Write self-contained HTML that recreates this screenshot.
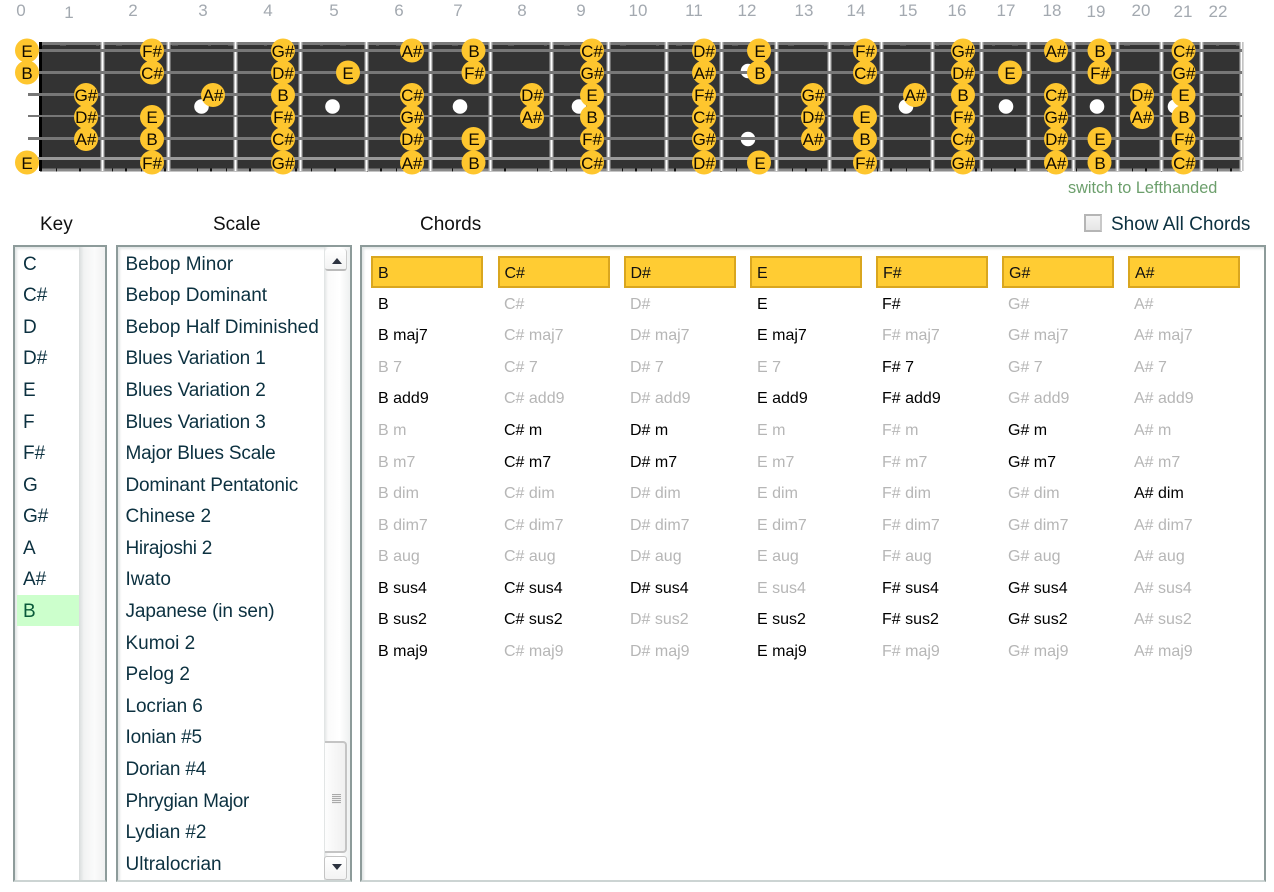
<!DOCTYPE html>
<html><head><meta charset="utf-8"><style>
html,body{margin:0;padding:0;background:#fff}
body{width:1274px;height:892px;position:relative;overflow:hidden;font-family:"Liberation Sans",sans-serif}
.a{position:absolute}
svg{position:absolute;left:0;top:0}
.h{position:absolute;top:214px;font-size:19px;line-height:22px;color:#111}
.box{position:absolute;top:245px;height:637px;box-sizing:border-box;border:2px solid #8d9b9a;border-bottom-color:#ccd4d3;background:#fff;box-shadow:inset 2px 2px 2px #e2e6e6}
.list{position:absolute;top:248.7px;font-size:19px;color:#0c3140}
.list div{height:31.58px;line-height:31.58px;white-space:nowrap}
.ch{position:absolute;top:288.7px;font-size:16px;color:#b6b6b6}
.ch div{height:31.58px;line-height:31.58px;white-space:nowrap}
.ch b{font-weight:normal;color:#000}
.hd{position:absolute;top:256px;width:112px;height:32px;box-sizing:border-box;background:#fc3;border:2px solid #d9a61f;font-size:16px;line-height:31px;padding-left:5px;color:#111}
svg.f text{font-size:17px;text-anchor:middle;fill:#100a00}
svg.n text{font-size:17px;text-anchor:middle;fill:#a3a9b0}
</style></head><body>
<svg class="n" width="1274" height="30">
<text x="21" y="16">0</text><text x="69" y="18">1</text><text x="133" y="16">2</text><text x="203" y="16">3</text><text x="268" y="16">4</text><text x="334" y="16">5</text><text x="399" y="16">6</text><text x="458" y="16">7</text><text x="522" y="16">8</text><text x="581" y="16">9</text><text x="638" y="16">10</text><text x="694" y="16">11</text><text x="747" y="16">12</text><text x="804" y="16">13</text><text x="856" y="16">14</text><text x="908" y="16">15</text><text x="957" y="16">16</text><text x="1006" y="16">17</text><text x="1052" y="16">18</text><text x="1096" y="17">19</text><text x="1141" y="16">20</text><text x="1183" y="17">21</text><text x="1218" y="17">22</text>
</svg>
<svg class="f" width="1274" height="180" style="top:0">
<rect x="40" y="42" width="1202" height="129" fill="#333"/>
<rect x="40" y="42" width="1202" height="3" fill="#7a7a7a"/>
<rect x="40" y="168.500" width="1202" height="3" fill="#8a8a8a"/>
<line x1="40" y1="170" x2="1242" y2="170" stroke="#111" stroke-width="3" stroke-dasharray="2 14 1 22 2 31 1 12"/>
<line x1="40" y1="45" x2="1242" y2="45" stroke="#777" stroke-width="1" stroke-dasharray="3 17 6 30"/>
<rect x="39" y="42" width="3" height="129" fill="#000"/>
<path d="M102.500 42V171M168.500 42V171M235.500 42V171M300.500 42V171M366.500 42V171M430.500 42V171M490.500 42V171M551.500 42V171M608.500 42V171M666.500 42V171M721.500 42V171M776.500 42V171M829.500 42V171M881.500 42V171M932.500 42V171M981.500 42V171M1028.500 42V171M1073.500 42V171M1117.500 42V171M1161.500 42V171M1201.500 42V171M1241.500 42V171" stroke="#b0b0b0" stroke-width="4" fill="none"/>
<path d="M102.500 42V171M168.500 42V171M235.500 42V171M300.500 42V171M366.500 42V171M430.500 42V171M490.500 42V171M551.500 42V171M608.500 42V171M666.500 42V171M721.500 42V171M776.500 42V171M829.500 42V171M881.500 42V171M932.500 42V171M981.500 42V171M1028.500 42V171M1073.500 42V171M1117.500 42V171M1161.500 42V171M1201.500 42V171M1241.500 42V171" stroke="#fff" stroke-width="1.500" fill="none"/>
<g fill="#fff">
<circle cx="201.500" cy="106.500" r="7.300"/><circle cx="332.500" cy="106.500" r="7.300"/><circle cx="460" cy="106.500" r="7.300"/><circle cx="579" cy="106.500" r="7.300"/><circle cx="748" cy="71" r="7.300"/><circle cx="748" cy="139" r="7.300"/><circle cx="906" cy="106.500" r="7.300"/><circle cx="1006" cy="106.500" r="7.300"/><circle cx="1097" cy="106.500" r="7.300"/><circle cx="1175" cy="106.500" r="7.300"/>
</g>
<g fill="#777">
<rect x="30" y="49" width="1212" height="3"/><rect x="30" y="71" width="1212" height="3"/><rect x="28" y="93" width="1214" height="3"/><rect x="28" y="115" width="1214" height="2"/><rect x="28" y="137" width="1214" height="3"/><rect x="30" y="157" width="1212" height="3" fill="#999"/>
</g>
<g fill="#fec62e">
<circle cx="27" cy="50.500" r="12"/><circle cx="152" cy="50.500" r="12"/><circle cx="283" cy="50.500" r="12"/><circle cx="412" cy="50.500" r="12"/><circle cx="473.500" cy="50.500" r="12"/><circle cx="592" cy="50.500" r="12"/><circle cx="704" cy="50.500" r="12"/><circle cx="759" cy="50.500" r="12"/><circle cx="865" cy="50.500" r="12"/><circle cx="963" cy="50.500" r="12"/><circle cx="1056" cy="50.500" r="12"/><circle cx="1099.500" cy="50.500" r="12"/><circle cx="1183.500" cy="50.500" r="12"/>
<circle cx="27" cy="72.500" r="12"/><circle cx="152" cy="72.500" r="12"/><circle cx="283" cy="72.500" r="12"/><circle cx="348" cy="72.500" r="12"/><circle cx="473.500" cy="72.500" r="12"/><circle cx="592" cy="72.500" r="12"/><circle cx="704" cy="72.500" r="12"/><circle cx="759" cy="72.500" r="12"/><circle cx="865" cy="72.500" r="12"/><circle cx="963" cy="72.500" r="12"/><circle cx="1010" cy="72.500" r="12"/><circle cx="1099.500" cy="72.500" r="12"/><circle cx="1183.500" cy="72.500" r="12"/>
<circle cx="86" cy="95" r="12"/><circle cx="213" cy="95" r="12"/><circle cx="283" cy="95" r="12"/><circle cx="412" cy="95" r="12"/><circle cx="532" cy="95" r="12"/><circle cx="592" cy="95" r="12"/><circle cx="704" cy="95" r="12"/><circle cx="813" cy="95" r="12"/><circle cx="915" cy="95" r="12"/><circle cx="963" cy="95" r="12"/><circle cx="1056" cy="95" r="12"/><circle cx="1142" cy="95" r="12"/><circle cx="1183.500" cy="95" r="12"/>
<circle cx="86" cy="117" r="12"/><circle cx="152" cy="117" r="12"/><circle cx="283" cy="117" r="12"/><circle cx="412" cy="117" r="12"/><circle cx="532" cy="117" r="12"/><circle cx="592" cy="117" r="12"/><circle cx="704" cy="117" r="12"/><circle cx="813" cy="117" r="12"/><circle cx="865" cy="117" r="12"/><circle cx="963" cy="117" r="12"/><circle cx="1056" cy="117" r="12"/><circle cx="1142" cy="117" r="12"/><circle cx="1183.500" cy="117" r="12"/>
<circle cx="86" cy="139" r="12"/><circle cx="152" cy="139" r="12"/><circle cx="283" cy="139" r="12"/><circle cx="412" cy="139" r="12"/><circle cx="473.500" cy="139" r="12"/><circle cx="592" cy="139" r="12"/><circle cx="704" cy="139" r="12"/><circle cx="813" cy="139" r="12"/><circle cx="865" cy="139" r="12"/><circle cx="963" cy="139" r="12"/><circle cx="1056" cy="139" r="12"/><circle cx="1099.500" cy="139" r="12"/><circle cx="1183.500" cy="139" r="12"/>
<circle cx="27" cy="162.500" r="12"/><circle cx="152" cy="162.500" r="12"/><circle cx="283" cy="162.500" r="12"/><circle cx="412" cy="162.500" r="12"/><circle cx="473.500" cy="162.500" r="12"/><circle cx="592" cy="162.500" r="12"/><circle cx="704" cy="162.500" r="12"/><circle cx="759" cy="162.500" r="12"/><circle cx="865" cy="162.500" r="12"/><circle cx="963" cy="162.500" r="12"/><circle cx="1056" cy="162.500" r="12"/><circle cx="1099.500" cy="162.500" r="12"/><circle cx="1183.500" cy="162.500" r="12"/>
</g>
<g>
<text x="27" y="57">E</text><text x="152" y="57">F#</text><text x="283" y="57">G#</text><text x="412" y="57">A#</text><text x="474" y="57">B</text><text x="592" y="57">C#</text><text x="704" y="57">D#</text><text x="760" y="57">E</text><text x="865" y="57">F#</text><text x="963" y="57">G#</text><text x="1056" y="57">A#</text><text x="1100" y="57">B</text><text x="1184" y="57">C#</text>
<text x="27" y="79">B</text><text x="152" y="79">C#</text><text x="283" y="79">D#</text><text x="348" y="79">E</text><text x="474" y="79">F#</text><text x="592" y="79">G#</text><text x="704" y="79">A#</text><text x="760" y="79">B</text><text x="865" y="79">C#</text><text x="963" y="79">D#</text><text x="1010" y="79">E</text><text x="1100" y="79">F#</text><text x="1184" y="79">G#</text>
<text x="86" y="101">G#</text><text x="213" y="101">A#</text><text x="283" y="101">B</text><text x="412" y="101">C#</text><text x="532" y="101">D#</text><text x="592" y="101">E</text><text x="704" y="101">F#</text><text x="813" y="101">G#</text><text x="915" y="101">A#</text><text x="963" y="101">B</text><text x="1056" y="101">C#</text><text x="1142" y="101">D#</text><text x="1184" y="101">E</text>
<text x="86" y="123">D#</text><text x="152" y="123">E</text><text x="283" y="123">F#</text><text x="412" y="123">G#</text><text x="532" y="123">A#</text><text x="592" y="123">B</text><text x="704" y="123">C#</text><text x="813" y="123">D#</text><text x="865" y="123">E</text><text x="963" y="123">F#</text><text x="1056" y="123">G#</text><text x="1142" y="123">A#</text><text x="1184" y="123">B</text>
<text x="86" y="145">A#</text><text x="152" y="145">B</text><text x="283" y="145">C#</text><text x="412" y="145">D#</text><text x="474" y="145">E</text><text x="592" y="145">F#</text><text x="704" y="145">G#</text><text x="813" y="145">A#</text><text x="865" y="145">B</text><text x="963" y="145">C#</text><text x="1056" y="145">D#</text><text x="1100" y="145">E</text><text x="1184" y="145">F#</text>
<text x="27" y="169">E</text><text x="152" y="169">F#</text><text x="283" y="169">G#</text><text x="412" y="169">A#</text><text x="474" y="169">B</text><text x="592" y="169">C#</text><text x="704" y="169">D#</text><text x="760" y="169">E</text><text x="865" y="169">F#</text><text x="963" y="169">G#</text><text x="1056" y="169">A#</text><text x="1100" y="169">B</text><text x="1184" y="169">C#</text>
</g>
</svg>
<div class="a" style="left:1068px;top:178px;font-size:16.3px;line-height:20px;color:#6c9f6c">switch to Lefthanded</div>
<div class="h" style="left:40px">Key</div>
<div class="h" style="left:213px">Scale</div>
<div class="h" style="left:420px">Chords</div>
<div class="a" style="left:1084px;top:214px;width:18px;height:18px;box-sizing:border-box;border:2px solid #b5b5b5;border-right-color:#c8c8c8;background:linear-gradient(#f4f4f4,#e6e6e6)"></div>
<div class="h" style="left:1111px;color:#0c3140">Show All Chords</div>

<div class="box" style="left:13px;width:94px"></div>
<div class="a" style="left:79px;top:247px;width:26px;height:633px;background:linear-gradient(90deg,#d8dcdc,#f2f3f3 5px,#fbfbfb 60%,#f0f1f1)"></div>
<div class="a" style="left:17px;top:594.500px;width:62px;height:31.500px;background:#cfc"></div>
<div class="list" style="left:23px">
<div>C</div><div>C#</div><div>D</div><div>D#</div><div>E</div><div>F</div><div>F#</div><div>G</div><div>G#</div><div>A</div><div>A#</div><div style="color:#0a5a3a">B</div>
</div>

<div class="box" style="left:116px;width:236px"></div>
<div class="a" style="left:324px;top:247px;width:26px;height:633px;background:linear-gradient(90deg,#dfe2e2,#fafafa 4px,#fff 60%,#eef0f0)"></div>
<div class="a" style="left:325px;top:249px;width:22px;height:22px;box-sizing:border-box;background:linear-gradient(#fff,#f3f3f3);border-right:1px solid #ccc;border-bottom:2px solid #bbb;border-radius:3px"></div>
<svg class="a" style="left:330px;top:256px" width="14" height="10"><path d="M2 8 L7 2 L12 8 Z" fill="#2d3340"/></svg>
<div class="a" style="left:325px;top:741px;width:22px;height:112px;box-sizing:border-box;background:linear-gradient(90deg,#fdfdfd,#f0f0f0);border-top:2px solid #c4c4c4;border-right:2px solid #c4c4c4;border-bottom:2px solid #c4c4c4;border-radius:0 4px 4px 0"></div>
<div class="a" style="left:332px;top:794px;width:9px;height:10px;background:repeating-linear-gradient(#aaa 0,#aaa 1px,#eee 1px,#eee 2px)"></div>
<div class="a" style="left:324px;top:856px;width:23px;height:24px;box-sizing:border-box;background:linear-gradient(#fff,#f3f3f3);border:1px solid #c4c4c4;border-radius:3px"></div>
<svg class="a" style="left:330px;top:862px" width="14" height="10"><path d="M2 2 L12 2 L7 8 Z" fill="#2d3340"/></svg>
<div class="list" style="left:125.500px">
<div>Bebop Minor</div><div>Bebop Dominant</div><div>Bebop Half Diminished</div><div style="letter-spacing:-.12px">Blues Variation 1</div><div style="letter-spacing:-.12px">Blues Variation 2</div><div style="letter-spacing:-.12px">Blues Variation 3</div><div style="letter-spacing:-.18px">Major Blues Scale</div><div style="letter-spacing:-.2px">Dominant Pentatonic</div><div>Chinese 2</div><div style="letter-spacing:-.3px">Hirajoshi 2</div><div>Iwato</div><div style="letter-spacing:-.12px">Japanese (in sen)</div><div>Kumoi 2</div><div>Pelog 2</div><div style="letter-spacing:-.1px">Locrian 6</div><div style="letter-spacing:-.2px">Ionian #5</div><div style="letter-spacing:-.2px">Dorian #4</div><div style="letter-spacing:-.3px">Phrygian Major</div><div style="letter-spacing:-.1px">Lydian #2</div><div>Ultralocrian</div>
</div>

<div class="box" style="left:360px;width:906px"></div>
<div class="hd" style="left:371px">B</div><div class="hd" style="left:497.500px">C#</div><div class="hd" style="left:623.500px">D#</div><div class="hd" style="left:750px">E</div><div class="hd" style="left:876px">F#</div><div class="hd" style="left:1002px">G#</div><div class="hd" style="left:1128px">A#</div>
<div class="ch" style="left:378px"><div><b>B</b></div><div><b>B maj7</b></div><div>B 7</div><div><b>B add9</b></div><div>B m</div><div>B m7</div><div>B dim</div><div>B dim7</div><div>B aug</div><div><b>B sus4</b></div><div><b>B sus2</b></div><div><b>B maj9</b></div></div>
<div class="ch" style="left:504px"><div>C#</div><div>C# maj7</div><div>C# 7</div><div>C# add9</div><div><b>C# m</b></div><div><b>C# m7</b></div><div>C# dim</div><div>C# dim7</div><div>C# aug</div><div><b>C# sus4</b></div><div><b>C# sus2</b></div><div>C# maj9</div></div>
<div class="ch" style="left:630px"><div>D#</div><div>D# maj7</div><div>D# 7</div><div>D# add9</div><div><b>D# m</b></div><div><b>D# m7</b></div><div>D# dim</div><div>D# dim7</div><div>D# aug</div><div><b>D# sus4</b></div><div>D# sus2</div><div>D# maj9</div></div>
<div class="ch" style="left:757px"><div><b>E</b></div><div><b>E maj7</b></div><div>E 7</div><div><b>E add9</b></div><div>E m</div><div>E m7</div><div>E dim</div><div>E dim7</div><div>E aug</div><div>E sus4</div><div><b>E sus2</b></div><div><b>E maj9</b></div></div>
<div class="ch" style="left:882px"><div><b>F#</b></div><div>F# maj7</div><div><b>F# 7</b></div><div><b>F# add9</b></div><div>F# m</div><div>F# m7</div><div>F# dim</div><div>F# dim7</div><div>F# aug</div><div><b>F# sus4</b></div><div><b>F# sus2</b></div><div>F# maj9</div></div>
<div class="ch" style="left:1008px"><div>G#</div><div>G# maj7</div><div>G# 7</div><div>G# add9</div><div><b>G# m</b></div><div><b>G# m7</b></div><div>G# dim</div><div>G# dim7</div><div>G# aug</div><div><b>G# sus4</b></div><div><b>G# sus2</b></div><div>G# maj9</div></div>
<div class="ch" style="left:1134px"><div>A#</div><div>A# maj7</div><div>A# 7</div><div>A# add9</div><div>A# m</div><div>A# m7</div><div><b>A# dim</b></div><div>A# dim7</div><div>A# aug</div><div>A# sus4</div><div>A# sus2</div><div>A# maj9</div></div>
</body></html>
